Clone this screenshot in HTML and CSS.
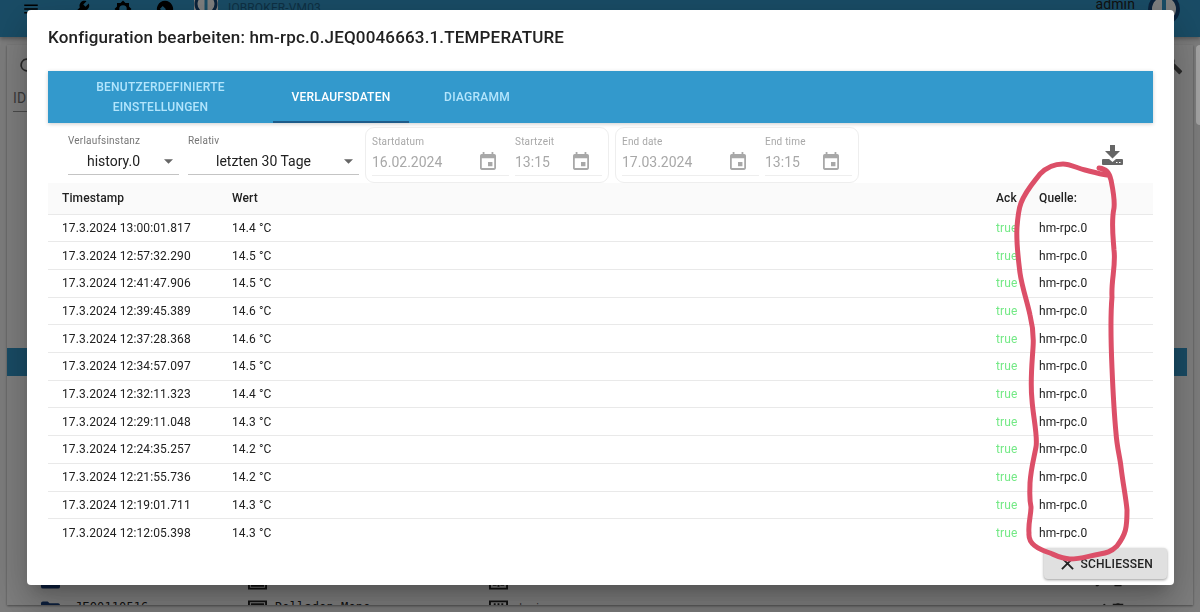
FILE: index.html
```html
<!doctype html>
<html lang="de">
  <head>
    <meta charset="UTF-8" />
    <meta name="viewport" content="width=device-width, initial-scale=1.0" />
    <title>ioBroker – Konfiguration bearbeiten</title>
    <link rel="stylesheet" href="styles.css">
  </head>
  <body>
    <div class="app" aria-hidden="true">
      <header class="appbar">
        <svg class="bar-icon" viewBox="0 0 24 24"><path d="M3 18h18v-2H3v2zm0-5h18v-2H3v2zm0-7v2h18V6H3z" /></svg>
        <svg class="bar-icon" viewBox="0 0 24 24"><path d="M22.700 19l-9.100-9.100c.9-2.300.4-5-1.500-6.900-2-2-5-2.400-7.400-1.300L9 6 6 9 1.600 4.700C.4 7.100.9 10.100 2.900 12.100c1.900 1.900 4.600 2.400 6.900 1.500l9.100 9.100c.4.4 1 .4 1.400 0l2.300-2.300c.5-.4.5-1.100.1-1.400z" transform="matrix(-1 0 0 1 24 0)" /></svg>
        <svg class="bar-icon" viewBox="0 0 24 24"><path d="M20 8.700V4h-4.700L12 .7 8.700 4H4v4.700L.7 12 4 15.300V20h4.700l3.300 3.300 3.300-3.300H20v-4.700l3.300-3.300L20 8.700zM12 17a5 5 0 010-10 5 5 0 010 10z" /></svg>
        <svg class="bar-icon" viewBox="0 0 24 24"><path d="M12 1a11 11 0 00-9 17h5v-4l-3-2 4-4 4 4-1 6h9A11 11 0 0012 1z" /></svg>
        <svg class="logo" viewBox="0 0 24 24"><path class="logo-bg" d="M0 0h24v24H0z" /><circle cx="12" cy="12" r="10" /><path class="logo-bar" d="M12 4v17" /></svg>
        <span class="host">IOBROKER-VM03</span>
        <span class="user">admin</span>
        <svg class="avatar" viewBox="0 0 32 32"><circle cx="16" cy="16" r="14" /><path d="M16 3v24" /></svg>
      </header>
      <main class="objects">
        <div class="objects-tools">
          <svg class="tool-icon" viewBox="0 0 24 24"><path d="M17.600 6.300A8 8 0 1019.700 14h-2A6 6 0 1112 6c1.700 0 3.100.7 4.200 1.800L13 11h7V4z" /></svg>
          <svg class="tool-icon" viewBox="0 0 24 24"><path d="M22.700 19l-9.100-9.100c.9-2.300.4-5-1.500-6.900-2-2-5-2.400-7.400-1.300L9 6 6 9 1.600 4.700C.4 7.100.9 10.100 2.900 12.100c1.900 1.900 4.600 2.400 6.900 1.500l9.100 9.100c.4.4 1 .4 1.400 0l2.300-2.300c.5-.4.5-1.100.1-1.400z" /></svg>
        </div>
        <div class="objects-filter">ID</div>
        <ul class="tree">
          <li class="tree-row selected"></li>
          <li class="tree-row">
            <svg class="folder" viewBox="0 0 20 16"><path d="M0 2q0-2 2-2h5l2 2h9q2 0 2 2v10q0 2-2 2H2q-2 0-2-2z" /></svg>
            <span class="tree-id"></span>
            <svg class="channel" viewBox="0 0 20 18"><path d="M1 1h18v16H1zM4 4h12v10H4z" /></svg>
            <span class="tree-name"></span>
            <svg class="device" viewBox="0 0 20 18"><path d="M1 1h18v16H1zM10 3v12M6 4v3M6 11v3M14 4v3M14 11v3M4 13h4M12 13h4" /></svg>
            <span class="tree-type"></span>
            <svg class="row-action" viewBox="0 0 24 24"><path d="M3 17v4h4L18 10l-4-4zM20.700 7a1 1 0 000-1.400L18.400 3.300a1 1 0 00-1.400 0l-2 2 4 4z" /></svg>
            <svg class="row-action" viewBox="0 0 24 24"><path d="M5 8h14l-1 13H6zM3 3h6l1-1h4l1 1h6v3H3z" /></svg>
          </li>
          <li class="tree-row">
            <svg class="folder" viewBox="0 0 20 16"><path d="M0 2q0-2 2-2h5l2 2h9q2 0 2 2v10q0 2-2 2H2q-2 0-2-2z" /></svg>
            <span class="tree-id">JEQ0110516</span>
            <svg class="channel" viewBox="0 0 20 18"><path d="M1 1h18v16H1zM4 4h12v10H4z" /></svg>
            <span class="tree-name">Rolladen Mono</span>
            <svg class="device" viewBox="0 0 20 18"><path d="M1 1h18v16H1zM10 3v12M6 3v5M14 3v5M4 6h4M12 6h4" /></svg>
            <span class="tree-type">device</span>
            <svg class="row-action" viewBox="0 0 24 24"><path d="M3 17v4h4L18 10l-4-4zM20.700 7a1 1 0 000-1.400L18.400 3.300a1 1 0 00-1.400 0l-2 2 4 4z" /></svg>
            <svg class="row-action" viewBox="0 0 24 24"><path d="M5 8h14l-1 13H6zM3 3h6l1-1h4l1 1h6v3H3z" /></svg>
          </li>
        </ul>
      </main>
    </div>

    <div class="backdrop"></div>
    <div class="scroll-thumb"></div>

    <div class="dialog" role="dialog" aria-modal="true" aria-labelledby="dialogTitle">
      <h2 id="dialogTitle" class="dialog-title">Konfiguration bearbeiten: hm-rpc.0.JEQ0046663.1.TEMPERATURE</h2>

      <div class="dialog-content">
        <div class="tabs" role="tablist">
          <button class="tab tab-wide" role="tab" aria-selected="false">Benutzerdefinierte Einstellungen</button>
          <button class="tab" role="tab" aria-selected="true">Verlaufsdaten</button>
          <button class="tab" role="tab" aria-selected="false">Diagramm</button>
        </div>

        <div class="filters">
          <div class="field field-instance">
            <label for="instance">Verlaufsinstanz</label>
            <select id="instance">
              <option>history.0</option>
            </select>
            <svg class="arrow" viewBox="0 0 10 5"><path d="M0 0h10L5 5z" /></svg>
          </div>
          <div class="field field-relative">
            <label for="relative">Relativ</label>
            <select id="relative">
              <option>letzten 30 Tage</option>
            </select>
            <svg class="arrow" viewBox="0 0 10 5"><path d="M0 0h10L5 5z" /></svg>
          </div>

          <div class="range">
            <div class="field field-date">
              <label for="startDate">Startdatum</label>
              <input id="startDate" type="text" value="16.02.2024" disabled />
              <svg class="calendar" viewBox="0 0 18 20"><path d="M16 2h-1V0h-2v2H5V0H3v2H2a2 2 0 00-2 2v14c0 1.100.9 2 2 2h14a2 2 0 002-2V4a2 2 0 00-2-2zm0 16H2V7h14zM9 11h5v5H9z" /></svg>
            </div>
            <div class="field field-time">
              <label for="startTime">Startzeit</label>
              <input id="startTime" type="text" value="13:15" disabled />
              <svg class="calendar" viewBox="0 0 18 20"><path d="M16 2h-1V0h-2v2H5V0H3v2H2a2 2 0 00-2 2v14c0 1.100.9 2 2 2h14a2 2 0 002-2V4a2 2 0 00-2-2zm0 16H2V7h14zM9 11h5v5H9z" /></svg>
            </div>
          </div>
          <div class="range">
            <div class="field field-date">
              <label for="endDate">End date</label>
              <input id="endDate" type="text" value="17.03.2024" disabled />
              <svg class="calendar" viewBox="0 0 18 20"><path d="M16 2h-1V0h-2v2H5V0H3v2H2a2 2 0 00-2 2v14c0 1.100.9 2 2 2h14a2 2 0 002-2V4a2 2 0 00-2-2zm0 16H2V7h14zM9 11h5v5H9z" /></svg>
            </div>
            <div class="field field-time">
              <label for="endTime">End time</label>
              <input id="endTime" type="text" value="13:15" disabled />
              <svg class="calendar" viewBox="0 0 18 20"><path d="M16 2h-1V0h-2v2H5V0H3v2H2a2 2 0 00-2 2v14c0 1.100.9 2 2 2h14a2 2 0 002-2V4a2 2 0 00-2-2zm0 16H2V7h14zM9 11h5v5H9z" /></svg>
            </div>
          </div>

          <button class="export" aria-label="Export">
            <svg viewBox="0 0 21 20"><path d="M8 0h5v6h5l-7.500 7.500L3 6h5zM0 15q0-1 1-1h6l3.500 3 3.500-3h6q1 0 1 1v4q0 1-1 1H1q-1 0-1-1zM14 17v1h1.500v-1zM17 17v1h1.500v-1z" fill-rule="evenodd" /></svg>
          </button>
        </div>

        <div class="table-wrap">
          <table>
            <thead>
              <tr><th class="col-ts">Timestamp</th><th>Wert</th><th class="col-ack">Ack</th><th class="col-from">Quelle:</th></tr>
            </thead>
            <tbody>
              <tr><td>17.3.2024 13:00:01.817</td><td>14.4 °C</td><td class="ack">true</td><td>hm-rpc.0</td></tr>
              <tr><td>17.3.2024 12:57:32.290</td><td>14.5 °C</td><td class="ack">true</td><td>hm-rpc.0</td></tr>
              <tr><td>17.3.2024 12:41:47.906</td><td>14.5 °C</td><td class="ack">true</td><td>hm-rpc.0</td></tr>
              <tr><td>17.3.2024 12:39:45.389</td><td>14.6 °C</td><td class="ack">true</td><td>hm-rpc.0</td></tr>
              <tr><td>17.3.2024 12:37:28.368</td><td>14.6 °C</td><td class="ack">true</td><td>hm-rpc.0</td></tr>
              <tr><td>17.3.2024 12:34:57.097</td><td>14.5 °C</td><td class="ack">true</td><td>hm-rpc.0</td></tr>
              <tr><td>17.3.2024 12:32:11.323</td><td>14.4 °C</td><td class="ack">true</td><td>hm-rpc.0</td></tr>
              <tr><td>17.3.2024 12:29:11.048</td><td>14.3 °C</td><td class="ack">true</td><td>hm-rpc.0</td></tr>
              <tr><td>17.3.2024 12:24:35.257</td><td>14.2 °C</td><td class="ack">true</td><td>hm-rpc.0</td></tr>
              <tr><td>17.3.2024 12:21:55.736</td><td>14.2 °C</td><td class="ack">true</td><td>hm-rpc.0</td></tr>
              <tr><td>17.3.2024 12:19:01.711</td><td>14.3 °C</td><td class="ack">true</td><td>hm-rpc.0</td></tr>
              <tr><td>17.3.2024 12:12:05.398</td><td>14.3 °C</td><td class="ack">true</td><td>hm-rpc.0</td></tr>
            </tbody>
          </table>
        </div>
      </div>

      <div class="dialog-actions">
        <button class="close">
          <svg viewBox="0 0 14 14"><path d="M1 1l12 12M13 1L1 13" /></svg>
          Schliessen
        </button>
      </div>

      <!-- hand-drawn marker around the source column -->
      <svg class="marker" viewBox="1010 155 130 410" aria-hidden="true">
        <path d="M1099 168C1106 169 1109 172 1111 180C1113 190 1115 199 1114 208C1111 222 1113 236 1114 250C1116 266 1111 280 1112 297C1110 320 1111 345 1112 368C1113 392 1114 412 1116 433C1117 448 1120 457 1121 467C1123 484 1126 498 1127 510C1127 528 1126 534 1117 546C1111 552 1106 553 1100 554C1088 556 1081 559 1070 559C1062 559 1055 555 1050 553C1038 549 1028 544 1029 533C1028 523 1031 516 1031 507C1029 498 1030 491 1030 483C1031 468 1034 458 1036 447C1038 437 1033 416 1032 400C1030 382 1032 364 1033 348C1034 335 1032 323 1030 315C1027 301 1022 287 1020 273C1018 257 1016 242 1017 227C1018 214 1019 208 1021 203C1026 190 1034 182 1040 174C1047 167 1054 164 1063 164C1070 164 1077 168 1085 170C1093 172 1100 174 1107 175" />
      </svg>
    </div>
  </body>
</html>
```
FILE: styles.css
```css
:root {
  --primary: #3399cc;
  --text: #212121;
  --muted: #757575;
  --disabled: #a8a8a8;
  --line: #e9e9e9;
  --marker: #dc4f68;
}

* {
  box-sizing: border-box;
}

body {
  margin: 0;
  font-family: Roboto, 'Liberation Sans', sans-serif;
  font-size: 12px;
  letter-spacing: 0.01em;
  color: var(--text);
}

button,
input,
select {
  font: inherit;
  color: inherit;
  border: 0;
  background: none;
  padding: 0;
}

/* Page behind the dialog */
.app {
  height: 100vh;
  display: flex;
  flex-direction: column;
  overflow: hidden;
  background: #fafafa;
}

.appbar {
  height: 37px;
  flex: none;
  display: flex;
  align-items: flex-start;
  gap: 24px;
  padding: 0 20px 0 22px;
  background: var(--primary);
  box-shadow: 0 2px 4px rgba(0, 0, 0, 0.3);
}
.bar-icon {
  width: 18px;
  height: 18px;
}
.bar-icon:first-child {
  margin-right: 8px;
}
.logo {
  width: 24px;
  height: 24px;
  margin: -8px -14px 0 -4px;
  fill: none;
  stroke: #144578;
  stroke-width: 3;
}
.logo .logo-bg {
  fill: #fff;
  stroke: none;
}
.logo .logo-bar {
  stroke: var(--primary);
}
.host {
  color: #1c6188;
  line-height: 16px;
}
.user {
  margin-left: auto;
  margin-right: -11px;
  font-size: 14px;
  line-height: 8px;
}
.avatar {
  width: 32px;
  height: 32px;
  margin-top: -7px;
  fill: #fff;
  stroke: #144578;
  stroke-width: 4;
}
.avatar path {
  stroke: var(--primary);
}

.objects {
  flex: 1;
  min-height: 0;
  margin: 8px 7px 7px;
  display: flex;
  flex-direction: column;
  overflow: hidden;
  background: #fff;
  box-shadow: 0 1px 2px rgba(0, 0, 0, 0.4);
}
.objects-tools {
  display: flex;
  justify-content: space-between;
  padding: 10px;
}
.tool-icon {
  width: 20px;
  height: 20px;
  fill: #555;
}
.objects-filter {
  width: 200px;
  margin-left: 6px;
  font-size: 14px;
  line-height: 26px;
  color: #777;
  border-bottom: 1px solid #999;
}
.tree {
  flex: 1;
  display: flex;
  flex-direction: column;
  justify-content: flex-end;
  list-style: none;
  padding: 0;
  margin: 0 6px -18px 0;
  font: 12px 'DejaVu Sans Mono', monospace;
}
.tree-row {
  flex: none;
  height: 28px;
  display: flex;
  align-items: center;
  padding: 0 62px 0 34px;
}
.tree-row.selected {
  margin-bottom: 191px;
  background: var(--primary);
}
.folder,
.channel,
.device {
  width: 19px;
  height: 18px;
  fill: #173f7c;
}
.channel,
.device {
  fill: none;
  stroke: #222;
  stroke-width: 2;
}
.tree-id,
.tree-name,
.tree-type {
  padding: 0 0 4px 8px;
}
.tree-id {
  width: 188px;
  padding-left: 15px;
}
.tree-name {
  width: 222px;
}
.tree-type {
  flex: 1;
  font-size: 10px;
  color: #555;
}
.row-action {
  width: 14px;
  height: 18px;
  margin-left: 3px;
  fill: #333;
}

.backdrop {
  position: fixed;
  inset: 0;
  background: rgba(0, 0, 0, 0.5);
}
.scroll-thumb {
  position: fixed;
  top: 45px;
  right: 0;
  width: 4px;
  height: 80px;
  border-radius: 4px 0 0 4px;
  background: #a6a6a6;
}

/* Dialog */
.dialog {
  position: fixed;
  inset: 10px 26px 27px 27px;
  display: flex;
  flex-direction: column;
  border-radius: 4px;
  background: #fff;
  box-shadow:
    0 11px 15px -7px rgba(0, 0, 0, 0.2),
    0 24px 38px 3px rgba(0, 0, 0, 0.14),
    0 9px 46px 8px rgba(0, 0, 0, 0.12);
}
.dialog-title {
  margin: 0;
  padding: 14px 21px 20px;
  font-size: 17px;
  font-weight: 500;
  line-height: 27px;
  letter-spacing: 0.01em;
}
.dialog-content {
  flex: 1;
  min-height: 0;
  display: flex;
  flex-direction: column;
  padding: 0 21px;
}

.tabs {
  flex: none;
  display: flex;
  height: 52px;
  background: var(--primary);
  box-shadow: 0 1px 4px rgba(0, 0, 0, 0.2);
}
.tab {
  min-width: 136px;
  padding: 2px 14px 0;
  font-weight: 500;
  line-height: 20px;
  letter-spacing: 0.02em;
  text-transform: uppercase;
  color: #b3e5fc;
  border-bottom: 2px solid transparent;
}
.tab-wide {
  width: 225px;
  padding: 2px 40px 0;
}
.tab[aria-selected='true'] {
  color: #fff;
  border-bottom-color: #1f5c8a;
}

.filters {
  flex: none;
  display: flex;
  align-items: center;
  height: 60px;
  padding: 3px 0 0 20px;
}
.field {
  position: relative;
  display: flex;
  flex-direction: column;
  border-bottom: 1px solid #c4c4c4;
}
.field label {
  font-size: 10px;
  line-height: 14px;
  letter-spacing: 0.02em;
  color: var(--muted);
}
.field select,
.field input {
  width: 100%;
  height: 26px;
  font-size: 14px;
}
.field select {
  appearance: none;
  padding-right: 20px;
  text-align: center;
  text-align-last: center;
}
.field-instance {
  width: 111px;
  margin-right: 9px;
}
.field-relative {
  width: 171px;
  margin-right: 6px;
}
.arrow {
  position: absolute;
  right: 6px;
  bottom: 10px;
  width: 9px;
  height: 5px;
  fill: #666;
}
.range {
  display: flex;
  gap: 6px;
  height: 56px;
  margin-right: 6px;
  padding: 7px 6px 6px;
  border: 1px solid #eee;
  border-radius: 9px;
}
.range .field {
  border-bottom-color: #eee;
}
.range label,
.range input {
  color: var(--disabled);
}
.field-date {
  width: 137px;
}
.field-time {
  width: 87px;
}
.calendar {
  position: absolute;
  right: 13px;
  bottom: 5px;
  width: 16px;
  height: 18px;
  fill: var(--disabled);
}
.export {
  margin-left: auto;
  margin-right: 30px;
  cursor: pointer;
}
.export svg {
  display: block;
  width: 21px;
  height: 20px;
  fill: #666;
}

.table-wrap {
  flex: 1;
  min-height: 0;
  overflow: hidden;
}
table {
  width: 100%;
  height: 364px;
  border-collapse: collapse;
  table-layout: fixed;
}
th,
td {
  padding: 0 0 0 14px;
  text-align: left;
  white-space: nowrap;
  border-bottom: 1px solid var(--line);
}
th {
  height: 31px;
  font-weight: 500;
  background: #fafafa;
}
.col-ts {
  width: 170px;
}
.col-ack {
  width: 43px;
}
.col-from {
  width: 128px;
}
.ack {
  color: #74e986;
}

.dialog-actions {
  display: flex;
  justify-content: flex-end;
  padding: 10px 7px 6px;
}
.close {
  display: flex;
  align-items: center;
  gap: 7px;
  height: 31px;
  padding: 0 14px 0 17px;
  font-weight: 500;
  letter-spacing: 0.02em;
  text-transform: uppercase;
  border-radius: 4px;
  background: #e0e0e0;
  box-shadow: 0 1px 3px rgba(0, 0, 0, 0.4);
  cursor: pointer;
}
.close svg {
  width: 13px;
  height: 13px;
  fill: none;
  stroke: #222;
  stroke-width: 2;
}

.marker {
  position: absolute;
  top: 145px;
  right: 34px;
  width: 130px;
  height: 410px;
  fill: none;
  stroke: var(--marker);
  stroke-width: 5;
  stroke-linecap: round;
  stroke-linejoin: round;
  pointer-events: none;
}
```
